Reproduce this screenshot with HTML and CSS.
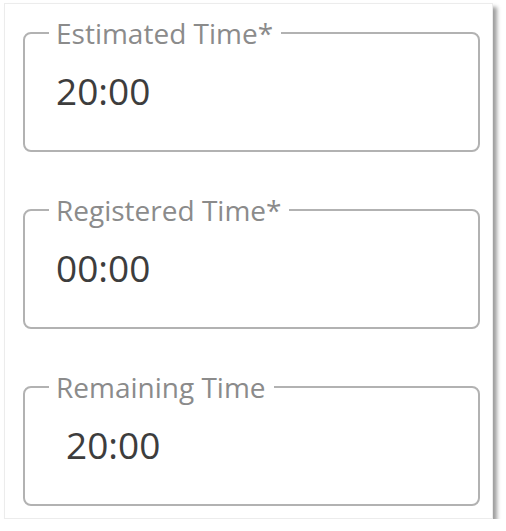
FILE: index.html
```html
<!DOCTYPE html>
<html lang="en">
<head>
<meta charset="utf-8">
<title>Time fields</title>
<link rel="stylesheet" href="styles.css">
</head>
<body>
  <div class="card">
    <fieldset class="field">
      <legend class="field-label">Estimated Time*</legend>
      <div class="field-value">20:00</div>
    </fieldset>
    <fieldset class="field">
      <legend class="field-label">Registered Time*</legend>
      <div class="field-value">00:00</div>
    </fieldset>
    <fieldset class="field">
      <legend class="field-label">Remaining Time</legend>
      <div class="field-value field-value--indented">20:00</div>
    </fieldset>
  </div>
</body>
</html>
```

FILE: styles.css
```css
html, body {
  margin: 0;
  padding: 0;
  background: #ffffff;
}

body {
  font-family: "Open Sans", "Noto Sans", sans-serif;
  padding: 3px 0 0 4px;
}

.card {
  box-sizing: border-box;
  width: 489px;
  height: 516px;
  background: #ffffff;
  border: 1px solid #ececec;
  box-shadow: 4px 4px 4px rgba(0, 0, 0, 0.38);
  padding: 15px 12px 12px 18px;
  display: flex;
  flex-direction: column;
  gap: 44px;
}

.field {
  margin: 0;
  min-width: 0;
  border: 2px solid #b2b2b2;
  border-radius: 8px;
  padding: 25px 31px 40px;
}

.field-label {
  margin-left: -7px;
  padding: 0 8px 0 7px;
  font-size: 28px;
  line-height: 28px;
  color: #8b8b8b;
}

.field-value {
  font-size: 37px;
  line-height: 38px;
  color: #3d3d3d;
}

.field-value--indented {
  padding-left: 10px;
}
```
